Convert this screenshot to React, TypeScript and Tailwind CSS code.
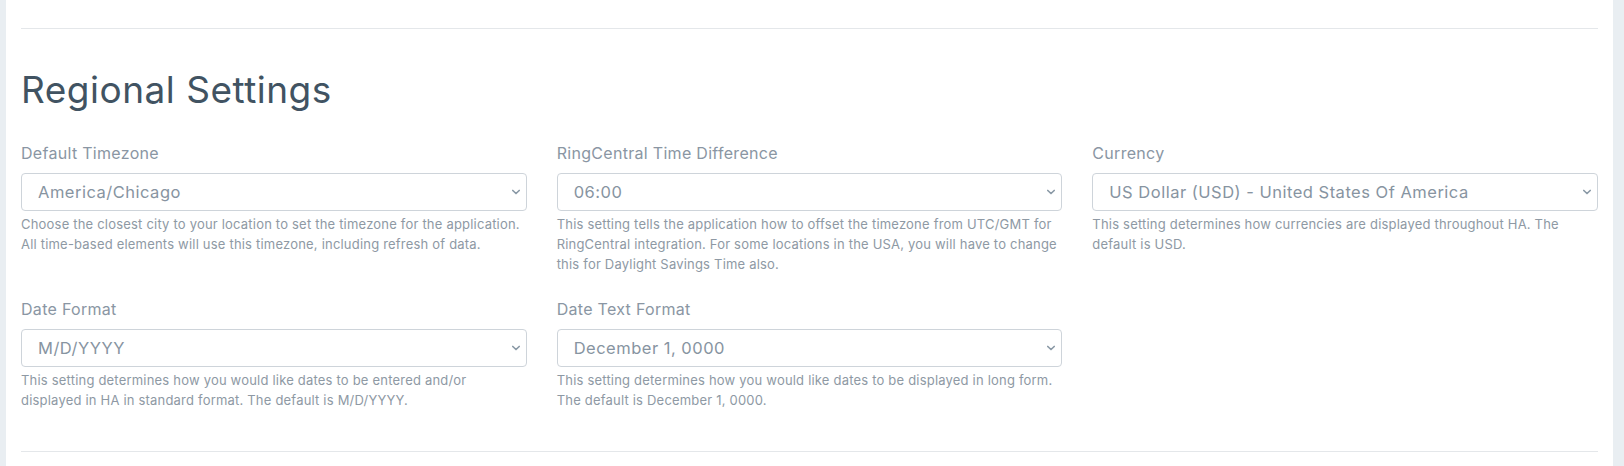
import React from 'react';

type Field = {
  label: string;
  value: string;
  help: string;
};

const rows: Field[][] = [
  [
    {
      label: 'Default Timezone',
      value: 'America/Chicago',
      help: 'Choose the closest city to your location to set the timezone for the application. All time-based elements will use this timezone, including refresh of data.',
    },
    {
      label: 'RingCentral Time Difference',
      value: '06:00',
      help: 'This setting tells the application how to offset the timezone from UTC/GMT for RingCentral integration. For some locations in the USA, you will have to change this for Daylight Savings Time also.',
    },
    {
      label: 'Currency',
      value: 'US Dollar (USD) - United States Of America',
      help: 'This setting determines how currencies are displayed throughout HA. The default is USD.',
    },
  ],
  [
    {
      label: 'Date Format',
      value: 'M/D/YYYY',
      help: 'This setting determines how you would like dates to be entered and/or displayed in HA in standard format. The default is M/D/YYYY.',
    },
    {
      label: 'Date Text Format',
      value: 'December 1, 0000',
      help: 'This setting determines how you would like dates to be displayed in long form. The default is December 1, 0000.',
    },
  ],
];

function SelectField({ field }: { field: Field }) {
  return (
    <div className="flex flex-col">
      <label className="text-[16px] leading-[22px] tracking-[0.3px] text-[#8a96a3] mb-[9px]">{field.label}</label>
      <div className="relative h-[38px] rounded-[4px] border border-[#ced4da] bg-white flex items-center pl-[16px] pr-8">
        <span className="text-[16.5px] tracking-[0.5px] text-[#8794a1] truncate">{field.value}</span>
        <svg
          className="absolute right-[5px] top-1/2 -translate-y-1/2"
          width="10"
          height="7"
          viewBox="0 0 10 7"
          fill="none"
        >
          <path d="M1.8 2 5 5 8.2 2" stroke="#8a99a6" strokeWidth="1.7" strokeLinecap="round" strokeLinejoin="round" />
        </svg>
      </div>
      <p className="mt-[3px] text-[13px] leading-[20px] tracking-[0.2px] text-[#8e99a4]">{field.help}</p>
    </div>
  );
}

export default function App() {
  return (
    <div
      className="flex w-[1624px] h-[466px] bg-[#e9eef2] overflow-hidden"
      style={{ fontFamily: 'Inter, "Noto Sans", sans-serif' }}
    >
      <div className="ml-[6px] w-[1607px] bg-white px-[15px] pt-[28px]">
        {/* top divider */}
        <div className="border-t border-[#e4e7ea]" />

        <h2 className="mt-[39px] text-[37px] leading-[43px] font-normal text-[#415362] tracking-[0.5px]">
          Regional Settings
        </h2>

        <div className="mt-[31px] flex flex-col gap-[24px]">
          {rows.map((row, i) => (
            <div key={i} className="grid grid-cols-3 gap-x-[30px]">
              {row.map(f => (
                <SelectField key={f.label} field={f} />
              ))}
            </div>
          ))}
        </div>

        {/* bottom divider */}
        <div className="mt-[41px] border-t border-[#e4e7ea]" />
      </div>
    </div>
  );
}
